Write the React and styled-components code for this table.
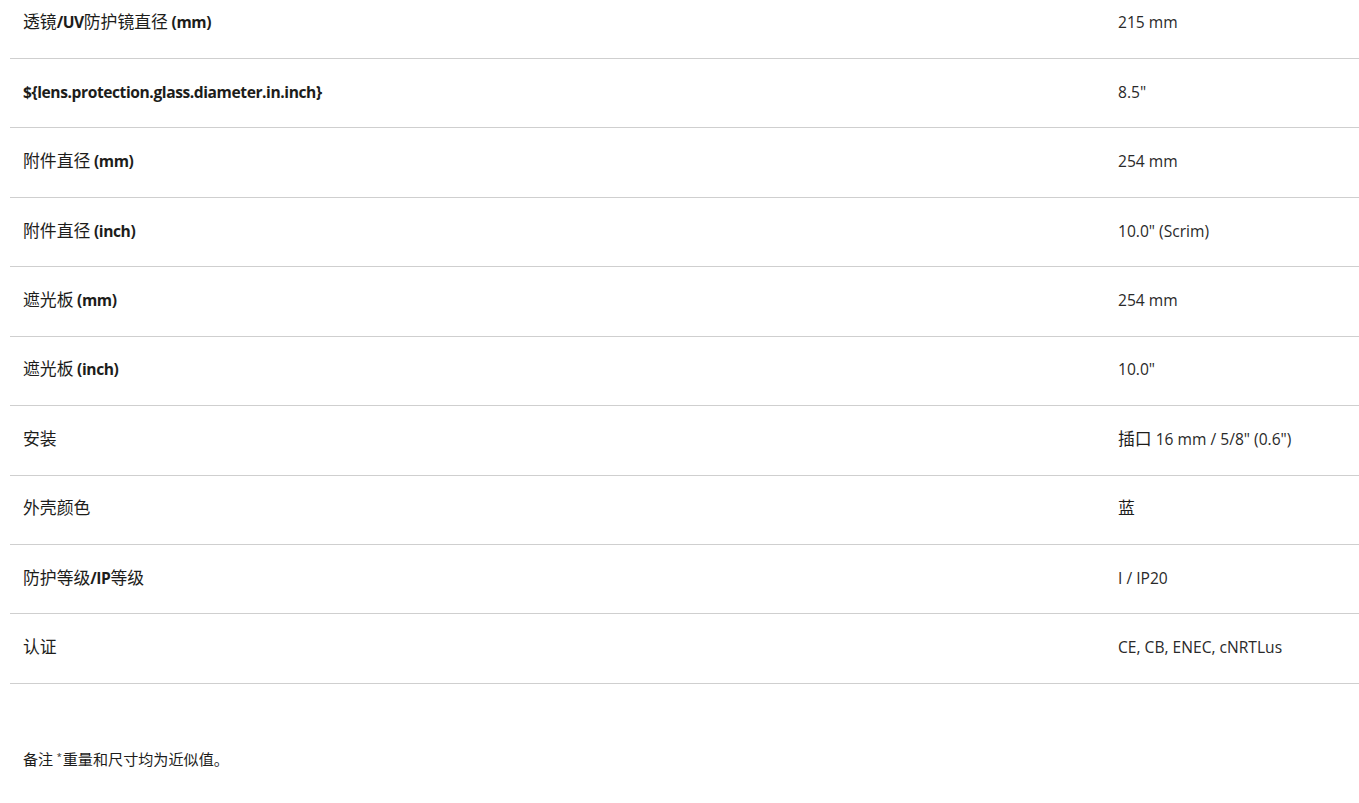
import styled, { createGlobalStyle } from 'styled-components';

const GlobalStyle = createGlobalStyle`
  html, body {
    margin: 0;
    padding: 0;
    background: #ffffff;
    overflow: hidden;
  }
  body {
    font-family: 'Open Sans', 'Noto Sans CJK SC', sans-serif;
    color: #1d1d1b;
  }
`;

const SPECS = [
  ['透镜/UV防护镜直径 (mm)', '215 mm'],
  ['${lens.protection.glass.diameter.in.inch}', '8.5"'],
  ['附件直径 (mm)', '254 mm'],
  ['附件直径 (inch)', '10.0" (Scrim)'],
  ['遮光板 (mm)', '254 mm'],
  ['遮光板 (inch)', '10.0"'],
  ['安装', '插口 16 mm / 5/8" (0.6")'],
  ['外壳颜色', '蓝'],
  ['防护等级/IP等级', 'I / IP20'],
  ['认证', 'CE, CB, ENEC, cNRTLus'],
];

const Page = styled.div`
  padding-left: 10px;
  width: 1400px;
`;

const Table = styled.div`
  margin-top: -10.5px;
`;

const Row = styled.div`
  display: grid;
  grid-template-columns: 1095px 1fr;
  align-items: center;
  height: 69.44px;
  box-sizing: border-box;
  padding: 0 13px 3px;
  border-bottom: 1px solid #cfcfcf;
  line-height: 20px;
`;

const Label = styled.div`
  font-size: 15.6px;
  font-weight: 700;
  letter-spacing: -0.42px;
`;

const Value = styled.div`
  font-size: 15.6px;
  font-weight: 400;
  color: #2a2a2a;
`;

const Cjk = styled.span`
  font-weight: 400;
  font-size: ${(p) => p.$scale || 1.08}em;
  letter-spacing: 0;
  color: #1d1d1b;
`;

const Note = styled.p`
  margin: 63px 0 0;
  padding-left: 13px;
  font-size: 13.5px;
  line-height: 20px;
`;

const Star = styled.sup`
  font-size: 9px;
  vertical-align: 5px;
  margin-right: 1px;
`;

const splitRuns = (text) =>
  text.split(/([\u3000-\u9fff\uff00-\uffef]+)/).filter(Boolean);

const Mixed = ({ text, scale }) =>
  splitRuns(text).map((part, i) =>
    /[\u3000-\u9fff]/.test(part) ? (
      <Cjk key={i} $scale={scale}>
        {part}
      </Cjk>
    ) : (
      part
    )
  );

export default function App() {
  return (
    <Page>
      <GlobalStyle />
      <Table>
        {SPECS.map(([label, value]) => (
          <Row key={label}>
            <Label>
              <Mixed text={label} />
            </Label>
            <Value>
              <Mixed text={value} />
            </Value>
          </Row>
        ))}
      </Table>
      <Note>
        <Cjk $scale={1.12}>备注</Cjk> <Star>*</Star>
        <Cjk $scale={1.12}>重量和尺寸均为近似值。</Cjk>
      </Note>
    </Page>
  );
}
